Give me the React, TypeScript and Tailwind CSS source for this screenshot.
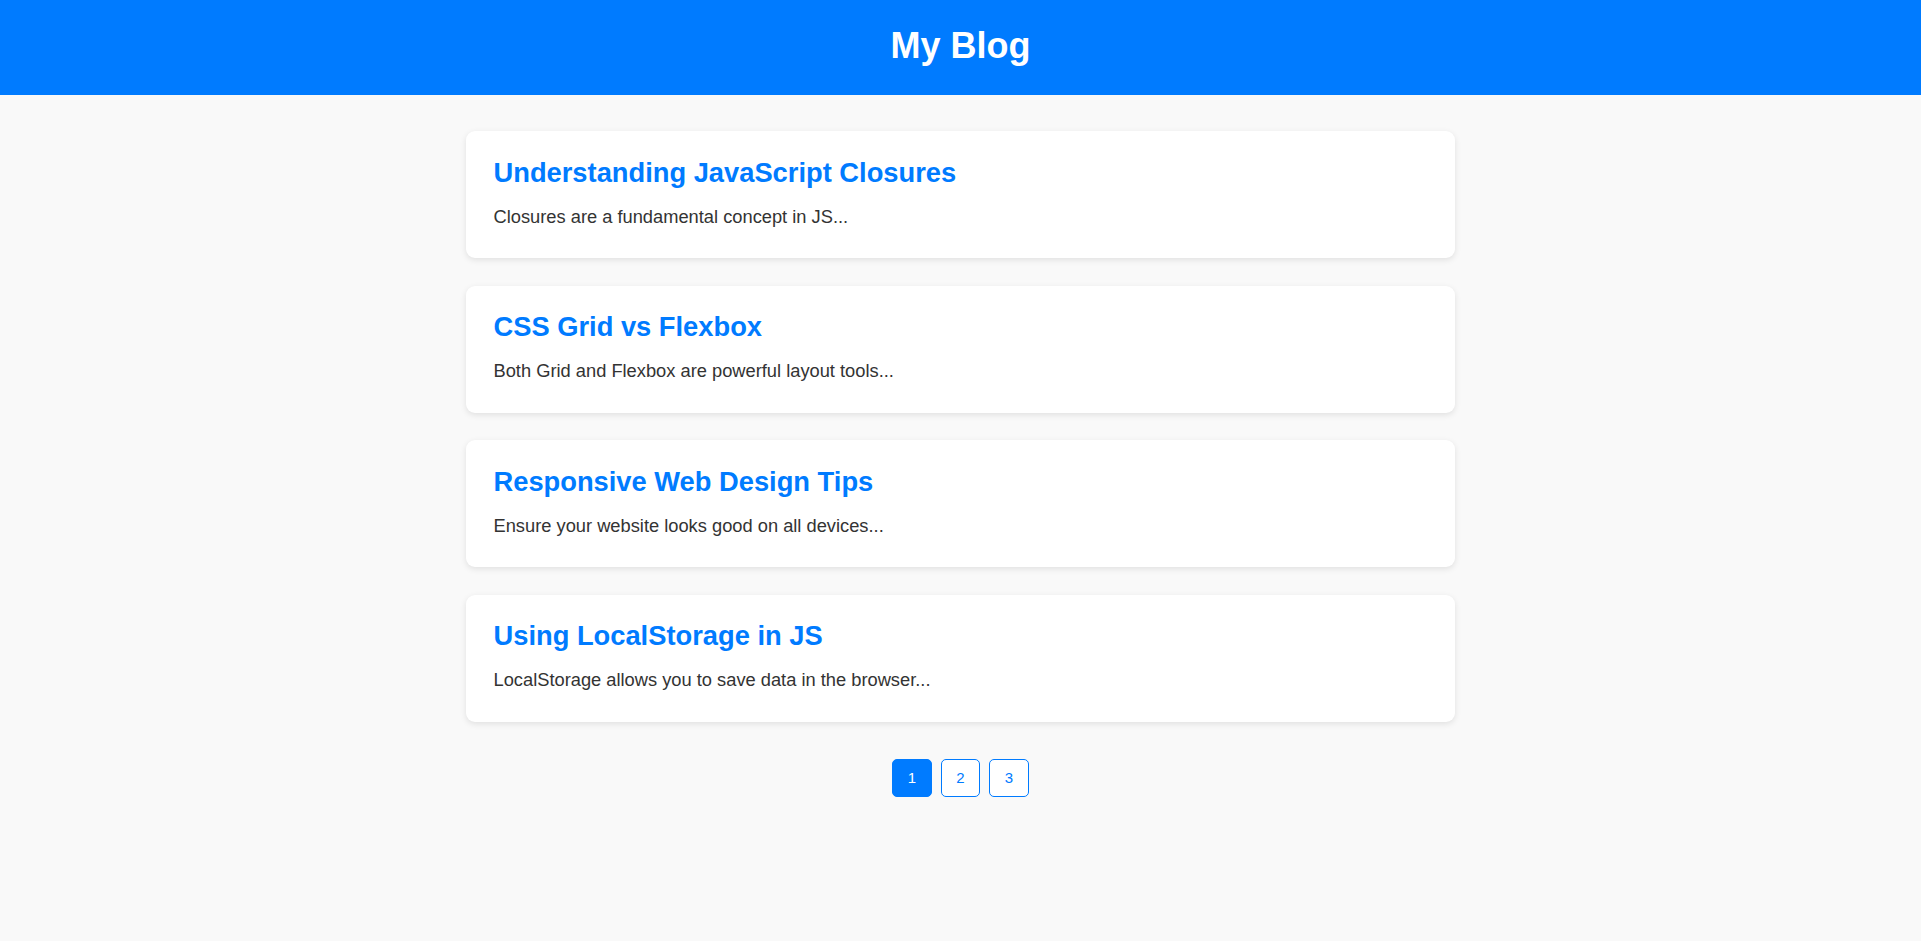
import React from "react";

const posts = [
  { id: 1, title: "Understanding JavaScript Closures", excerpt: "Closures are a fundamental concept in JS..." },
  { id: 2, title: "CSS Grid vs Flexbox", excerpt: "Both Grid and Flexbox are powerful layout tools..." },
  { id: 3, title: "Responsive Web Design Tips", excerpt: "Ensure your website looks good on all devices..." },
  { id: 4, title: "Using LocalStorage in JS", excerpt: "LocalStorage allows you to save data in the browser..." },
];

function PostCard({ title, excerpt }: { title: string; excerpt: string }) {
  return (
    <article className="bg-white rounded-[9px] shadow-[0_2px_6px_rgba(0,0,0,0.1)] px-[27.5px] pt-[25.5px] pb-[31.5px]">
      <h2 className="text-[27.3px] leading-[31px] font-bold text-[#007bff] mb-[18px]">{title}</h2>
      <p className="text-[18.3px] leading-[21px] text-[#333]">{excerpt}</p>
    </article>
  );
}

export default function App() {
  const pages = [1, 2, 3];
  const current = 1;

  return (
    <div className="min-h-screen bg-[#f9f9f9] font-['Liberation_Sans',Arial,sans-serif]">
      {/* Header */}
      <header className="bg-[#007bff] pt-[25px] pb-[29px] text-center">
        <h1 className="text-[36px] leading-[41px] font-bold text-white">My Blog</h1>
      </header>

      {/* Posts */}
      <main className="w-[989px] mx-auto pt-[36px]">
        <div className="flex flex-col gap-[27.5px]">
          {posts.map((p) => (
            <PostCard key={p.id} title={p.title} excerpt={p.excerpt} />
          ))}
        </div>

        {/* Paginação */}
        <nav className="flex justify-center gap-[9px] mt-[37.5px]">
          {pages.map((n) => (
            <button
              key={n}
              className={
                n === current
                  ? "w-[39.5px] h-[37.5px] rounded-[5px] border border-[#007bff] bg-[#007bff] text-white text-[15px]"
                  : "w-[39.5px] h-[37.5px] rounded-[5px] border border-[#007bff] bg-white text-[#007bff] text-[15px]"
              }
            >
              {n}
            </button>
          ))}
        </nav>
      </main>
    </div>
  );
}
